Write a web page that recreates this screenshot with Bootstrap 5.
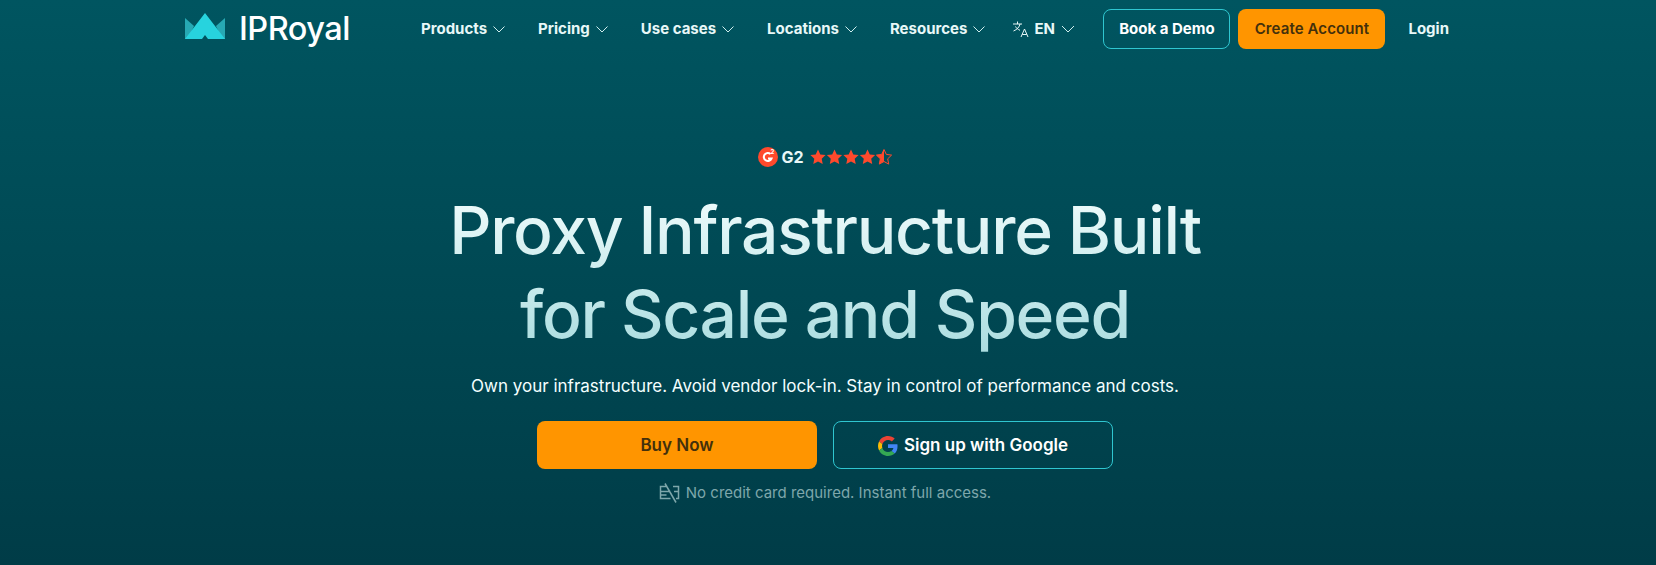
<!DOCTYPE html>
<html lang="en">
<head>
  <meta charset="UTF-8">
  <title>IPRoyal</title>
  <link href="https://cdn.jsdelivr.net/npm/bootstrap@5.3.3/dist/css/bootstrap.min.css" rel="stylesheet">
  <style>
    body {
      min-height: 565px;
      background: linear-gradient(180deg, #005560 0%, #003c47 100%);
      font-family: Inter, "Noto Sans", sans-serif;
      color: #fff;
      overflow: hidden;
    }
    .top-bar {
      height: 58px;
      padding-left: 185px;
      padding-right: 207px;
    }
    .brand-link {
      width: 236px;
      color: #fff;
      font-size: 32.5px;
      font-weight: 500;
      letter-spacing: -0.5px;
      text-decoration: none;
      gap: 14px;
    }
    .brand-mark { margin-top: -5px; }
    .menu-link {
      color: #e8f8f8;
      font-size: 15px;
      font-weight: 700;
      text-decoration: none;
      white-space: nowrap;
    }
    .menu-group { gap: 33px; }
    .menu-group .menu-link { gap: 6px; }
    .lang-link { margin-left: 27px; gap: 4px; }
    .lang-caret { margin-left: 2px; }
    .login-link { margin-left: 15px; }
    .btn-demo, .btn-create {
      height: 40px;
      font-size: 15px;
      border-radius: 8px;
      display: flex;
      align-items: center;
      justify-content: center;
      white-space: nowrap;
    }
    .btn-demo { color: #fff; font-weight: 700; border: 1px solid #2fc6d0; width: 127px; }
    .btn-create { background: #ff9500; color: #43300c; font-weight: 600; letter-spacing: .1px; width: 147px; }
    .hero-box { padding: 87px 6px 0 0; }
    .hero-title {
      font-size: 66px;
      line-height: 84px;
      font-weight: 500;
      letter-spacing: -1.35px;
      margin: 19px 0 0;
      background: linear-gradient(180deg, #f2fdfd 0%, #a9dcdf 100%);
      -webkit-background-clip: text;
      background-clip: text;
      color: transparent;
    }
    .hero-sub { font-size: 17px; margin: 17px 0 0; line-height: 26px; color: #f4ffff; }
    .hero-actions { margin-top: 22px; gap: 16px; }
    .hero-btn {
      width: 280px;
      height: 48px;
      padding-top: 1px;
      font-size: 17px;
      font-weight: 600;
      border-radius: 8px;
      display: flex;
      align-items: center;
      justify-content: center;
      gap: 6px;
    }
    .hero-buy { background: #ff9500; color: #43300c; }
    .hero-google { border: 1px solid #2fc6d0; color: #fff; }
    .hero-note { color: #7ea7ab; font-size: 15px; margin-top: 13px; gap: 6px; }
    .g2-row { gap: 3px; }
    .g2-label { font-size: 16px; font-weight: 700; color: #e8f8f8; margin-right: 3px; }
    .g2-sup { font-size: 6px; font-weight: 700; fill: #fff; }
  </style>
</head>
<body>

<nav class="top-bar d-flex align-items-center">
  <a class="brand-link d-flex align-items-center" href="#">
    <svg class="brand-mark" width="40" height="27" viewBox="0 0 40 27">
      <path d="M0 5 9 13 3 26H0Z" fill="#27a9b4"/>
      <path d="M40 5 31 13 37 26H40Z" fill="#27a9b4"/>
      <path d="M20 0 40 26H23L20 22 17 26H0Z" fill="#27d3de"/>
    </svg>
    <span>IPRoyal</span>
  </a>
  <div class="menu-group d-flex align-items-center">
    <a class="menu-link d-flex align-items-center" href="#">Products <svg width="12" height="7" viewBox="0 0 12 7"><path d="M.5.500 6 6 11.500.500" fill="none" stroke="#cfeeee"/></svg></a>
    <a class="menu-link d-flex align-items-center" href="#">Pricing <svg width="12" height="7" viewBox="0 0 12 7"><path d="M.5.500 6 6 11.500.500" fill="none" stroke="#cfeeee"/></svg></a>
    <a class="menu-link d-flex align-items-center" href="#">Use cases <svg width="12" height="7" viewBox="0 0 12 7"><path d="M.5.500 6 6 11.500.500" fill="none" stroke="#cfeeee"/></svg></a>
    <a class="menu-link d-flex align-items-center" href="#">Locations <svg width="12" height="7" viewBox="0 0 12 7"><path d="M.5.500 6 6 11.500.500" fill="none" stroke="#cfeeee"/></svg></a>
    <a class="menu-link d-flex align-items-center" href="#">Resources <svg width="12" height="7" viewBox="0 0 12 7"><path d="M.5.500 6 6 11.500.500" fill="none" stroke="#cfeeee"/></svg></a>
  </div>
  <a class="menu-link lang-link d-flex align-items-center" href="#">
    <svg width="18" height="18" viewBox="0 0 18 18" fill="none" stroke="#e8f8f8" stroke-width="1"><path d="M1 4h9M5.500 1.500V4M8 4c-.6 3-2.800 5.500-6.500 7M3.500 6.500c1 1.800 2.500 3 4.500 3.800M9 17l3.500-8 3.500 8M10.200 14.500h4.600"/></svg>
    EN
    <svg class="lang-caret" width="14" height="8" viewBox="0 0 14 8"><path d="M1 1l6 6 6-6" fill="none" stroke="#cfeeee"/></svg>
  </a>
  <div class="d-flex align-items-center gap-2 ms-auto">
    <a class="btn-demo text-decoration-none" href="#">Book a Demo</a>
    <a class="btn-create text-decoration-none" href="#">Create Account</a>
    <a class="menu-link login-link" href="#">Login</a>
  </div>
</nav>

<main class="hero-box text-center">
  <div class="g2-row d-flex justify-content-center align-items-center">
    <svg width="20" height="20" viewBox="0 0 20 20"><circle cx="10" cy="10" r="10" fill="#ff492c"/><path d="M12.500 7A4 4 0 1 0 13.500 11.500H10" fill="none" stroke="#fff" stroke-width="2"/><text class="g2-sup" x="12.500" y="7">2</text></svg>
    <span class="g2-label">G2</span>
    <svg width="82" height="16" viewBox="0 0 82 16">
      <defs>
        <path id="starShape" d="M8 .5l2.300 4.900 5.300.7-3.900 3.700 1 5.300L8 12.500l-4.700 2.600 1-5.300L.4 6.100l5.300-.7z"/>
      </defs>
      <use href="#starShape" fill="#ff492c"/>
      <use href="#starShape" x="16.500" fill="#ff492c"/>
      <use href="#starShape" x="33" fill="#ff492c"/>
      <use href="#starShape" x="49.500" fill="#ff492c"/>
      <use href="#starShape" x="66" fill="none" stroke="#ff492c"/>
      <path d="M74 .5v12l-4.700 2.600 1-5.300-3.900-3.700 5.300-.7z" fill="#ff492c"/>
    </svg>
  </div>
  <h1 class="hero-title">Proxy Infrastructure Built<br>for Scale and Speed</h1>
  <p class="hero-sub">Own your infrastructure. Avoid vendor lock-in. Stay in control of performance and costs.</p>
  <div class="hero-actions d-flex justify-content-center">
    <a class="hero-btn hero-buy text-decoration-none" href="#">Buy Now</a>
    <a class="hero-btn hero-google text-decoration-none" href="#">
      <svg width="20" height="20" viewBox="0 0 48 48">
        <path fill="#EA4335" d="M24 9.500c3.500 0 6.700 1.200 9.200 3.600l6.900-6.900C35.900 2.400 30.500 0 24 0 14.600 0 6.500 5.400 2.600 13.200l8 6.200C12.500 13.700 17.800 9.500 24 9.500z"/>
        <path fill="#4285F4" d="M46.900 24.500c0-1.600-.2-3.100-.4-4.500H24v9h12.900c-.6 3-2.200 5.500-4.700 7.200l7.700 6c4.500-4.200 7-10.300 7-17.700z"/>
        <path fill="#FBBC05" d="M10.500 28.600c-.5-1.400-.8-3-.8-4.600s.3-3.200.8-4.600l-8-6.200C.9 16.500 0 20.100 0 24s.9 7.500 2.600 10.800z"/>
        <path fill="#34A853" d="M24 48c6.500 0 11.900-2.100 15.900-5.800l-7.700-6c-2.200 1.400-4.900 2.300-8.200 2.300-6.200 0-11.500-4.200-13.400-9.900l-8 6.200C6.500 42.600 14.600 48 24 48z"/>
      </svg>
      Sign up with Google
    </a>
  </div>
  <div class="hero-note d-flex justify-content-center align-items-center">
    <svg width="21" height="20" viewBox="0 0 21 20" fill="none" stroke="#7ea7ab" stroke-width="1.500"><path d="M8.500 3.500H1.500v12h10M14 3.500h5.500v12H17M1.500 8.500h10M15 8.500h4.500M1.500 12h6M6 .5l11 19"/></svg>
    No credit card required. Instant full access.
  </div>
</main>

<script src="https://cdn.jsdelivr.net/npm/bootstrap@5.3.3/dist/js/bootstrap.bundle.min.js"></script>
</body>
</html>
